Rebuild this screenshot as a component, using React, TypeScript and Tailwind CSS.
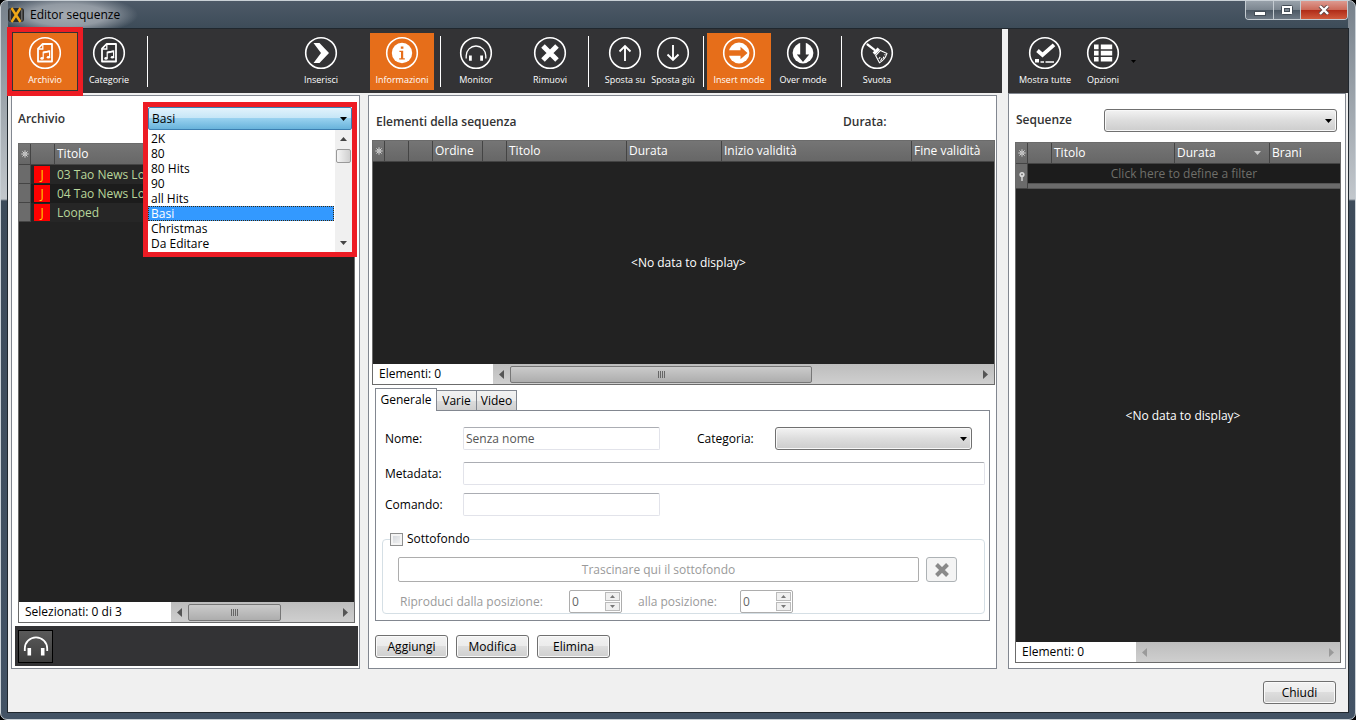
import React, { useState } from 'react';
import clsx from 'clsx';

const archives = ['2K', '80', '80 Hits', '90', 'all Hits', 'Basi', 'Christmas', 'Da Editare'];

const tracks = [
  { id: 1, title: '03 Tao News Log' },
  { id: 2, title: '04 Tao News Log' },
  { id: 3, title: 'Looped' },
];

/* ---------- Icons ---------- */

const Ring: React.FC<{ children: React.ReactNode }> = ({ children }) => (
  <svg viewBox="0 0 34 34" className="w-[34px] h-[34px]" fill="none" stroke="white" strokeWidth="1.6">
    <circle cx="17" cy="17" r="15.3" />
    {children}
  </svg>
);

const MusicFileIcon = () => (
  <Ring>
    <path d="M14.5 8H24V25.5H10V12.7Z" strokeWidth="1.8" strokeLinejoin="round" />
    <path d="M14.8 8.5V13H10.5" strokeWidth="1.3" />
    <path d="M15.2 22.4V16.2L21.6 15V21.2" strokeWidth="1.2" />
    <path d="M15.2 16.6L21.6 15.4" strokeWidth="1.8" />
    <ellipse cx="14" cy="22.4" rx="1.7" ry="1.3" fill="white" stroke="none" />
    <ellipse cx="20.4" cy="21.2" rx="1.7" ry="1.3" fill="white" stroke="none" />
  </Ring>
);

const ChevronIcon = () => (
  <Ring>
    <path d="M9.5 7H15.5L25 17L15.5 27H9.5L17 17Z" fill="white" stroke="none" />
  </Ring>
);

const InfoIcon = () => (
  <Ring>
    <circle cx="17" cy="17" r="10.2" fill="white" stroke="none" />
    <path d="M15.8 10.4h2.6v2.4h-2.6zM14.4 14.8h3.8v7.4h1.6v1.2h-5.6v-1.2h1.8v-6.2h-1.6z" fill="#e66e1a" stroke="none" />
  </Ring>
);

const HeadphonesIcon = () => (
  <Ring>
    <path d="M7.2 22.5V19.8A9.8 9.8 0 0 1 26.8 19.8V22.5" strokeWidth="1.3" />
    <path d="M10 19.5h2.8v5.2H10zM21.2 19.5h2.8v5.2h-2.8z" fill="white" stroke="none" />
  </Ring>
);

const RemoveIcon = () => (
  <Ring>
    <path d="M10 10L24 24M24 10L10 24" strokeWidth="5" />
  </Ring>
);

const UpIcon = () => (
  <Ring>
    <path d="M17 25V10M11.5 15.5L17 10L22.5 15.5" strokeWidth="1.9" />
  </Ring>
);

const DownIcon = () => (
  <Ring>
    <path d="M17 9V24M11.5 18.5L17 24L22.5 18.5" strokeWidth="1.9" />
  </Ring>
);

const InsertIcon = () => (
  <Ring>
    <circle cx="17" cy="17" r="10.4" fill="white" stroke="none" />
    <path d="M5.5 14.2H18.5V10.8L25.5 17L18.5 23.2V19.8H5.5Z" fill="#e66e1a" stroke="none" />
  </Ring>
);

const OverIcon = () => (
  <Ring>
    <circle cx="17" cy="17" r="10.4" fill="white" stroke="none" />
    <path d="M14.2 5.5V18.5H10.8L17 26L23.2 18.5H19.8V5.5Z" fill="#333335" stroke="none" />
  </Ring>
);

const BroomIcon = () => (
  <Ring>
    <path d="M7.5 8.5L14.5 13.8" strokeWidth="2.2" strokeLinecap="round" />
    <path d="M12.6 16.6L17.6 11.4L20 13.8L15 19Z" fill="white" stroke="none" />
    <path d="M20.4 14.4L27 17.4C26 20.5 23.5 24.5 19.5 26.8L15.6 19.6Z" strokeWidth="1.1" strokeLinejoin="round" />
    <path d="M18.8 22.8L20.2 21M20.6 25L22 22.2M23.2 22.6L23.8 20.6M25.2 19.4L24.8 18.2" strokeWidth="1.1" />
  </Ring>
);

const ShowAllIcon = () => (
  <Ring>
    <path d="M9.5 14.5L14.5 19L26 8.8" strokeWidth="3.8" />
    <path d="M7 23h4v3.6H7z" fill="white" stroke="none" />
    <path d="M12.5 26H16M17.5 26H26" strokeWidth="1.3" />
  </Ring>
);

const OptionsIcon = () => (
  <Ring>
    <path
      d="M8 8.6h4.6v4.6H8zM14.8 8.6h11.4v4.6H14.8zM8 14.8h4.6v4.6H8zM14.8 14.8h11.4v4.6H14.8zM8 21h4.6v4.6H8zM14.8 21h11.4v4.6H14.8z"
      fill="white"
      stroke="none"
    />
  </Ring>
);

const Star = () => (
  <svg viewBox="0 0 8 8" className="w-2 h-2 mx-auto" stroke="#e0e0e0" strokeWidth="0.9">
    <path d="M4 0.3V7.7M0.3 4H7.7M1.4 1.4L6.6 6.6M6.6 1.4L1.4 6.6" />
    <circle cx="4" cy="4" r="1.1" fill="#6d6d6d" />
  </svg>
);

interface TriangleProps {
  dir: 'up' | 'down' | 'left' | 'right';
  className: string;
}

const trianglePaths = {
  up: 'M0 8L4 0L8 8Z',
  down: 'M0 0H8L4 8Z',
  left: 'M8 0V8L0 4Z',
  right: 'M0 0L8 4L0 8Z',
};

const Triangle: React.FC<TriangleProps> = ({ dir, className }) => (
  <svg viewBox="0 0 8 8" preserveAspectRatio="none" className={className} fill="currentColor">
    <path d={trianglePaths[dir]} />
  </svg>
);

/* ---------- Shared pieces ---------- */

interface ToolButtonProps {
  label: string;
  icon: React.ReactNode;
  active?: boolean;
  narrow?: boolean;
}

const ToolButton: React.FC<ToolButtonProps> = ({ label, icon, active, narrow }) => (
  <button
    className={clsx(
      'shrink-0 h-[57px] flex flex-col items-center pt-[3px] text-[9px] leading-[14px] text-white whitespace-nowrap',
      narrow ? 'w-12' : 'w-16',
      active && 'bg-[#e66e1a]'
    )}
  >
    {icon}
    <span className="mt-[3px]">{label}</span>
  </button>
);

const Separator = () => <div className="shrink-0 w-px h-[51px] ml-1.5 mr-[3px] bg-white" />;

interface ComboProps {
  id: string;
  label: string;
  className: string;
  options?: string[];
  value?: string;
}

const Combo: React.FC<ComboProps> = ({ id, label, className, options = [], value = '' }) => (
  <div className={clsx('relative h-[23px]', className)}>
    <select
      id={id}
      aria-label={label}
      defaultValue={value}
      className="block appearance-none w-full h-full pl-1 pr-5 rounded-[3px] border border-[#707070] bg-linear-to-b from-[#f3f3f3] from-0% via-[#dddddd] via-50% to-[#cdcdcd] shadow-[inset_0_0_0_1px_#f8f8f8] outline-none"
    >
      {options.length === 0 && <option value=""></option>}
      {options.map((o) => (
        <option key={o}>{o}</option>
      ))}
    </select>
    <Triangle dir="down" className="absolute right-[5px] top-[10px] w-[7px] h-1 text-black pointer-events-none" />
  </div>
);

interface GridFooterProps {
  text: string;
  labelWidth: string;
  thumb?: string;
}

const GridFooter: React.FC<GridFooterProps> = ({ text, labelWidth, thumb }) => (
  <div className="flex h-5 shrink-0 bg-white">
    <div className={clsx('pl-1.5 leading-5 whitespace-nowrap', labelWidth)}>{text}</div>
    <div
      className={clsx(
        'flex-1 flex items-center px-1.5 bg-linear-to-b from-[#bdbdbd] to-[#cfcfcf]',
        thumb ? 'text-[#555]' : 'text-[#9a9a9a]'
      )}
    >
      <Triangle dir="left" className="w-[5px] h-[9px]" />
      {thumb && (
        <div
          className={clsx(
            'ml-1.5 h-[17px] rounded-[2px] border border-[#777] bg-linear-to-b from-[#cbcbcb] to-[#adadad] flex items-center justify-center gap-px',
            thumb
          )}
        >
          {[0, 1, 2, 3].map((i) => (
            <span key={i} className="w-px h-[7px] bg-[#666]" />
          ))}
        </div>
      )}
      <Triangle dir="right" className="ml-auto w-[5px] h-[9px]" />
    </div>
  </div>
);

interface Column {
  label?: string;
  width?: string;
  sorted?: boolean;
  star?: boolean;
}

const HeaderRow: React.FC<{ columns: Column[] }> = ({ columns }) => (
  <thead>
    <tr className="h-[21px] bg-linear-to-b from-[#757575] to-[#666666] text-white">
      {columns.map((c, i) => (
        <th
          key={i}
          className={clsx(
            'p-0 text-left font-normal whitespace-nowrap border-b border-[#444]',
            i < columns.length - 1 && 'border-r',
            c.width
          )}
        >
          {c.star && <Star />}
          {c.label && (
            <span className="flex items-center justify-between pl-0.5 pr-2 leading-5">
              {c.label}
              {c.sorted && <Triangle dir="down" className="w-[7px] h-1 text-[#c8c8c8]" />}
            </span>
          )}
        </th>
      ))}
    </tr>
  </thead>
);

const sequenceColumns: Column[] = [
  { star: true, width: 'w-3' },
  { width: 'w-6' },
  { width: 'w-6' },
  { label: 'Ordine', width: 'w-[50px]' },
  { width: 'w-6' },
  { label: 'Titolo', width: 'w-[120px]' },
  { label: 'Durata', width: 'w-[95px]' },
  { label: 'Inizio validità', width: 'w-[190px]' },
  { label: 'Fine validità' },
];

const listColumns: Column[] = [
  { star: true, width: 'w-3' },
  { width: 'w-6' },
  { label: 'Titolo', width: 'w-[123px]' },
  { label: 'Durata', width: 'w-[95px]', sorted: true },
  { label: 'Brani' },
];

const PushButton: React.FC<{ children: React.ReactNode }> = ({ children }) => (
  <button className="w-[73px] h-[23px] rounded-[3px] border border-[#707070] bg-[linear-gradient(#f2f2f2_0%,#ebebeb_50%,#dddddd_50%,#cfcfcf_100%)] shadow-[inset_0_0_0_1px_#fafafa] leading-5">
    {children}
  </button>
);

const fieldClass =
  'h-[23px] px-0.5 rounded-[2px] border border-[#e2e3ea] border-t-[#abadb3] bg-white text-[#555] outline-none';

const Spinner: React.FC<{ id: string }> = ({ id }) => (
  <div className="w-[53px] h-[23px] flex items-center pr-px rounded-[2px] border border-[#adadad] bg-white">
    <input id={id} defaultValue="0" className="w-0 flex-1 px-0.5 text-[#666] outline-none" />
    <div className="flex flex-col gap-px text-[#777]">
      <button aria-label="Aumenta" className="w-[15px] h-[9px] flex items-center justify-center border border-[#bbb] bg-[#f0f0f0]">
        <Triangle dir="up" className="w-[5px] h-[3px]" />
      </button>
      <button aria-label="Diminuisci" className="w-[15px] h-[9px] flex items-center justify-center border border-[#bbb] bg-[#f0f0f0]">
        <Triangle dir="down" className="w-[5px] h-[3px]" />
      </button>
    </div>
  </div>
);

/* ---------- Title bar ---------- */

const TitleBar = () => (
  <div className="flex h-[28px] shrink-0 items-start justify-between border-b border-[#a3b0bb] bg-linear-to-b from-[#4d5967] to-[#3d4c59]">
    <div className="flex h-full w-[160px] items-center gap-1.5 bg-[radial-gradient(70px_20px_at_60px_14px,#a4abb2_0%,#929aa3_55%,transparent_100%)]">
      <svg viewBox="0 0 16 16" className="w-4 h-4">
        <rect x="0" y="1" width="16" height="14" rx="3" fill="#2a2a2a" />
        <path d="M2.2 2.5V13.5M13.8 2.5V13.5" stroke="#777" strokeWidth="1.2" />
        <path d="M3.5 1L12.5 15M12.5 1L3.5 15" stroke="#f0a818" strokeWidth="2.4" />
      </svg>
      <h1 className="whitespace-nowrap text-black">Editor sequenze</h1>
    </div>
    <div className="flex h-[19px] rounded-b-[4px] border border-t-0 border-[#c4cbd1] overflow-hidden">
      <button aria-label="Riduci a icona" className="w-7 flex items-center justify-center border-r border-[#c4cbd1] bg-[linear-gradient(#98a1aa_0%,#7c8690_48%,#4d5965_52%,#6d7884_100%)]">
        <svg viewBox="0 0 12 5" className="w-3 h-[5px] mt-1.5">
          <rect x="0.5" y="0.5" width="11" height="4" fill="white" stroke="#444d57" />
        </svg>
      </button>
      <button aria-label="Ingrandisci" className="w-[27px] flex items-center justify-center border-r border-[#c4cbd1] bg-[linear-gradient(#98a1aa_0%,#7c8690_48%,#4d5965_52%,#6d7884_100%)]">
        <svg viewBox="0 0 12 10" className="w-3 h-2.5">
          <rect x="0.5" y="0.5" width="11" height="9" rx="1" fill="white" stroke="#444d57" />
          <rect x="3.5" y="3.5" width="5" height="3" fill="#7c8690" stroke="#444d57" />
        </svg>
      </button>
      <button aria-label="Chiudi finestra" className="w-[46px] flex items-center justify-center bg-[linear-gradient(#dd9a90_0%,#cc6a5a_48%,#b02c18_52%,#d05a3c_100%)]">
        <svg viewBox="0 0 12 10" className="w-3 h-2.5">
          <path d="M2 1L10 9M10 1L2 9" stroke="#5c4444" strokeWidth="4" />
          <path d="M2 1L10 9M10 1L2 9" stroke="white" strokeWidth="2.4" />
        </svg>
      </button>
    </div>
  </div>
);

/* ---------- Left: archive ---------- */

const ArchivePanel = () => {
  const [selected, setSelected] = useState('Basi');

  return (
    <section className="w-[349px] shrink-0 flex flex-col border border-[#828790] bg-white pl-[3px] pr-px pb-0.5">
      <div className="flex h-[47px] shrink-0 items-center pb-0.5 pl-[3px]">
        <h2 className="w-[130px] font-semibold text-[#333]">Archivio</h2>
        <div className="relative h-[23px] w-[204px]">
          <select
            aria-label="Archivio"
            value={selected}
            onChange={(e) => setSelected(e.target.value)}
            className="block appearance-none w-full h-full pl-[3px] border border-[#3c7fb1] rounded-[2px] bg-[linear-gradient(#e2f3fc_0%,#c4e5f6_50%,#98d1ef_50%,#68b3db_100%)] outline-none"
          >
            {archives.map((a) => (
              <option key={a}>{a}</option>
            ))}
          </select>
          <Triangle dir="down" className="absolute right-[5px] top-[10px] w-[7px] h-1 text-black pointer-events-none" />

          {/* Open list, drawn over the grid */}
          <div className="absolute left-0 top-full z-10 flex h-[122px] w-full bg-white">
            <ul role="listbox" aria-label="Archivi" className="flex-1 pt-px">
              {archives.map((a) => (
                <li
                  key={a}
                  role="option"
                  aria-selected={a === selected}
                  onClick={() => setSelected(a)}
                  className={clsx(
                    'h-[15px] pl-[3px] mr-px leading-[15px]',
                    a === selected && 'bg-[#3399ff] text-white outline-1 -outline-offset-1 outline-dotted outline-[#3a2a10]'
                  )}
                >
                  {a}
                </li>
              ))}
            </ul>
            <div className="w-[17px] flex flex-col items-center bg-[#f0f0f0] py-[7px] text-[#444]">
              <Triangle dir="up" className="w-[7px] h-1" />
              <div className="mt-2 h-3.5 w-[15px] rounded-[2px] border border-[#999] bg-linear-to-r from-[#f5f5f5] to-[#cfcfcf]" />
              <Triangle dir="down" className="mt-auto w-[7px] h-1" />
            </div>
          </div>

          {/* Highlight frame */}
          <div className="absolute -inset-x-[5px] -top-[5px] z-20 h-[155px] border-[5px] border-[#ed1c24] pointer-events-none" />
        </div>
      </div>

      <div className="flex flex-1 min-h-0 flex-col ml-[3px] mr-[3px] border border-[#6b6b6b] bg-[#222]">
        <table className="w-full table-fixed border-separate border-spacing-0">
          <HeaderRow columns={[{ star: true, width: 'w-3' }, { width: 'w-6' }, { label: 'Titolo' }]} />
          <tbody>
            {tracks.map((t, i) => (
              <tr key={t.id} className={clsx('h-[19px] text-[#b9d69b]', i % 2 ? 'bg-[#1c1c1c]' : 'bg-[#262626]')}>
                <td className="p-0 border-r border-b border-[#444] bg-[#6b6b6b]" />
                <td className="p-0">
                  <span className="ml-[3px] flex h-[17px] w-4 items-center justify-center bg-[#fe0000] text-[#ffd800] leading-4">J</span>
                </td>
                <td className="p-0 pl-0.5 leading-[19px]">
                  <span className="block w-[87px] overflow-hidden whitespace-nowrap">{t.title}</span>
                </td>
              </tr>
            ))}
          </tbody>
        </table>
        <div className="flex-1" />
        <GridFooter text="Selezionati: 0 di 3" labelWidth="w-[152px]" thumb="w-[93px]" />
      </div>

      <div className="mt-[3px] flex h-10 shrink-0 items-center bg-[#333335] pl-[3px]">
        <button aria-label="Preascolto" className="flex h-[33px] w-[35px] items-center justify-center border border-black bg-linear-to-b from-[#5a5a5a] to-[#3e3e3e]">
          <svg viewBox="0 0 26 22" className="w-[26px] h-[22px]" fill="none" stroke="white">
            <path d="M1.8 16V13.5A11.2 11.2 0 0 1 24.2 13.5V16" strokeWidth="1.8" />
            <path d="M4.5 13h3.6v7.5H4.5zM17.9 13h3.6v7.5h-3.6z" fill="white" stroke="none" />
          </svg>
        </button>
      </div>
    </section>
  );
};

/* ---------- Middle: sequence elements ---------- */

const tabs = ['Generale', 'Varie', 'Video'];

const DetailForm = () => {
  const [tab, setTab] = useState('Generale');

  return (
    <div className="ml-[3px] mr-[5px] mt-[3px] shrink-0">
      <div className="flex h-[22px] items-end" role="tablist">
        {tabs.map((t) => (
          <button
            key={t}
            role="tab"
            aria-selected={t === tab}
            onClick={() => setTab(t)}
            className={clsx(
              'border border-[#828790]',
              t === tab
                ? 'relative h-[23px] w-[62px] border-b-0 bg-white -mb-px'
                : 'h-5 -ml-px w-[41px] border-b-0 bg-[linear-gradient(#f2f2f2_0%,#ebebeb_50%,#dddddd_50%,#cfcfcf_100%)]'
            )}
          >
            {t}
          </button>
        ))}
      </div>

      <div className="h-[211px] border border-[#828790] pl-1.5 pr-1 pt-4">
        <div className="flex items-center pl-[3px]">
          <label htmlFor="nome" className="w-[78px]">Nome:</label>
          <input id="nome" defaultValue="Senza nome" className={clsx(fieldClass, 'w-[197px]')} />
          <label htmlFor="categoria" className="ml-[37px] w-[78px]">Categoria:</label>
          <Combo id="categoria" label="Categoria" className="w-[197px]" />
        </div>
        <div className="mt-3 flex items-center pl-[3px]">
          <label htmlFor="metadata" className="w-[78px]">Metadata:</label>
          <input id="metadata" className={clsx(fieldClass, 'flex-1')} />
        </div>
        <div className="mt-2 flex items-center pl-[3px]">
          <label htmlFor="comando" className="w-[78px]">Comando:</label>
          <input id="comando" className={clsx(fieldClass, 'w-[197px]')} />
        </div>

        <fieldset className="mt-3.5 h-[84px] rounded-[4px] border border-[#d5dfe5] pl-[15px] pr-[27px]">
          <legend className="-ml-2 h-[18px]">
            <label className="flex items-center gap-1 leading-[18px]">
              <input
                type="checkbox"
                className="appearance-none w-[13px] h-[13px] border border-[#8e8f8f] bg-linear-to-br from-[#cfd3d8] to-[#f6f6f6] shadow-[inset_0_0_0_2px_#f4f4f4]"
              />
              Sottofondo
            </label>
          </legend>
          <div className="mt-[9px] flex gap-[7px]">
            <div className="flex h-[25px] flex-1 items-center justify-center rounded-[2px] border border-[#adadad] text-[#9a9a9a]">
              Trascinare qui il sottofondo
            </div>
            <button aria-label="Rimuovi sottofondo" className="flex h-[25px] w-[31px] items-center justify-center rounded-[3px] border border-[#adb2b5] bg-[#f4f4f4]">
              <svg viewBox="0 0 14 14" className="w-3.5 h-3.5" stroke="#8a8a8a" strokeWidth="4">
                <path d="M1.5 1.5L12.5 12.5M12.5 1.5L1.5 12.5" />
              </svg>
            </button>
          </div>
          <div className="mt-2 flex items-center pl-0.5 text-[#9a9a9a]">
            <label htmlFor="da" className="w-[169px]">Riproduci dalla posizione:</label>
            <Spinner id="da" />
            <label htmlFor="a" className="ml-4 w-[102px]">alla posizione:</label>
            <Spinner id="a" />
          </div>
        </fieldset>
      </div>

      <div className="mt-3.5 flex gap-2">
        <PushButton>Aggiungi</PushButton>
        <PushButton>Modifica</PushButton>
        <PushButton>Elimina</PushButton>
      </div>
    </div>
  );
};

const SequencePanel = () => (
  <section className="flex min-w-0 flex-1 flex-col border border-[#828790] bg-white pl-[3px] pr-px pb-2.5">
    <div className="flex h-11 shrink-0 items-end pl-1 pb-2.5 font-semibold text-[#333]">
      <h2 className="w-[467px]">Elementi della sequenza</h2>
      <span>Durata:</span>
    </div>
    <div className="flex min-h-0 flex-1 flex-col border border-[#6b6b6b] bg-[#222]">
      <table className="w-full table-fixed border-separate border-spacing-0">
        <HeaderRow columns={sequenceColumns} />
      </table>
      <div className="flex flex-1 items-center justify-center pl-2.5 text-white">&lt;No data to display&gt;</div>
      <GridFooter text="Elementi: 0" labelWidth="w-[120px]" thumb="w-[302px]" />
    </div>
    <DetailForm />
  </section>
);

/* ---------- Right: saved sequences ---------- */

const SequenceListPanel = () => (
  <section className="flex flex-1 min-h-0 flex-col mr-0.5 border border-[#828790] bg-white pl-1.5 pr-1 pb-[5px]">
    <div className="flex h-12 shrink-0 items-center pt-1">
      <h2 className="w-[89px] pl-px font-semibold text-[#333]">Sequenze</h2>
      <Combo id="sequenze" label="Sequenze" className="mr-1 flex-1" />
    </div>
    <div className="flex min-h-0 flex-1 flex-col border border-[#6b6b6b] bg-[#222]">
      <table className="w-full table-fixed border-separate border-spacing-0">
        <HeaderRow columns={listColumns} />
        <tbody>
          <tr className="h-[25px]">
            <td className="p-0 bg-[#6b6b6b] border-r border-b border-[#444]">
              <svg viewBox="0 0 6 9" className="w-1.5 h-[9px] mx-auto" fill="#ddd">
                <circle cx="3" cy="2.6" r="2.6" />
                <rect x="2.3" y="4" width="1.4" height="5" />
                <circle cx="3" cy="2.4" r="0.9" fill="#6b6b6b" />
              </svg>
            </td>
            <td colSpan={4} className="p-0 text-center text-[#6f6f6a]">
              <div className="bg-[#1c1c1c] leading-[19px]">Click here to define a filter</div>
              <div className="h-1.5 border-y border-[#555] bg-[#6b6b6b]" />
            </td>
          </tr>
        </tbody>
      </table>
      <div className="flex flex-1 items-center justify-center pl-2.5 text-white">&lt;No data to display&gt;</div>
      <GridFooter text="Elementi: 0" labelWidth="w-[120px]" />
    </div>
  </section>
);

/* ---------- Toolbars ---------- */

const MainToolbar = () => (
  <div className="flex h-16 shrink-0 items-center bg-[#333335] pl-[5px]">
    <div className="flex w-[357px] shrink-0 items-center pr-[17px]">
      <div className="relative">
        <ToolButton label="Archivio" icon={<MusicFileIcon />} active />
        <div className="absolute -inset-1.5 z-20 border-[5px] border-[#ed1c24] pointer-events-none" />
      </div>
      <ToolButton label="Categorie" icon={<MusicFileIcon />} />
      <Separator />
      <div className="flex-1" />
      <ToolButton label="Inserisci" icon={<ChevronIcon />} />
    </div>
    <ToolButton label="Informazioni" icon={<InfoIcon />} active />
    <Separator />
    <div className="flex gap-2.5">
      <ToolButton label="Monitor" icon={<HeadphonesIcon />} />
      <ToolButton label="Rimuovi" icon={<RemoveIcon />} />
    </div>
    <Separator />
    <div className="flex w-[105px] shrink-0 justify-end">
      <ToolButton label="Sposta su" icon={<UpIcon />} narrow />
      <ToolButton label="Sposta giù" icon={<DownIcon />} narrow />
    </div>
    <Separator />
    <ToolButton label="Insert mode" icon={<InsertIcon />} active />
    <ToolButton label="Over mode" icon={<OverIcon />} />
    <Separator />
    <ToolButton label="Svuota" icon={<BroomIcon />} />
  </div>
);

const ListToolbar = () => (
  <div className="flex h-16 shrink-0 items-center gap-0.5 bg-[#333335] pl-[5px]">
    <ToolButton label="Mostra tutte" icon={<ShowAllIcon />} />
    <div className="flex items-center">
      <ToolButton label="Opzioni" icon={<OptionsIcon />} narrow />
      <button aria-label="Altre opzioni" className="ml-0.5 p-0.5">
        <Triangle dir="down" className="w-[5px] h-[3px] text-black" />
      </button>
    </div>
  </div>
);

const App: React.FC = () => {
  return (
    <div className="h-screen bg-black font-['Open_Sans','Noto_Sans',sans-serif] text-[12px] leading-4 text-black">
      <div className="flex h-full flex-col overflow-hidden rounded-[7px] border border-[#c9d0d6] bg-[linear-gradient(#77818b_0px,#c2c7cc_198px,#3d4b5a_200px,#435365_100%)] px-[7px] pb-[7px]">
        <TitleBar />
        <div className="flex min-h-0 flex-1 flex-col bg-[#f0f0f0] outline-1 outline-[#20272e]">
          <div className="flex min-h-0 flex-1 gap-1.5">
            <div className="flex min-w-0 flex-1 flex-col">
              <MainToolbar />
              <div className="flex min-h-0 flex-1 gap-2 pl-[3px] pr-[5px] pt-0.5">
                <ArchivePanel />
                <SequencePanel />
              </div>
            </div>
            <div className="flex w-[340px] shrink-0 flex-col">
              <ListToolbar />
              <SequenceListPanel />
            </div>
          </div>
          <div className="flex h-[43px] shrink-0 items-center justify-end pr-3 pt-1">
            <PushButton>Chiudi</PushButton>
          </div>
        </div>
      </div>
    </div>
  );
};

export default App;
